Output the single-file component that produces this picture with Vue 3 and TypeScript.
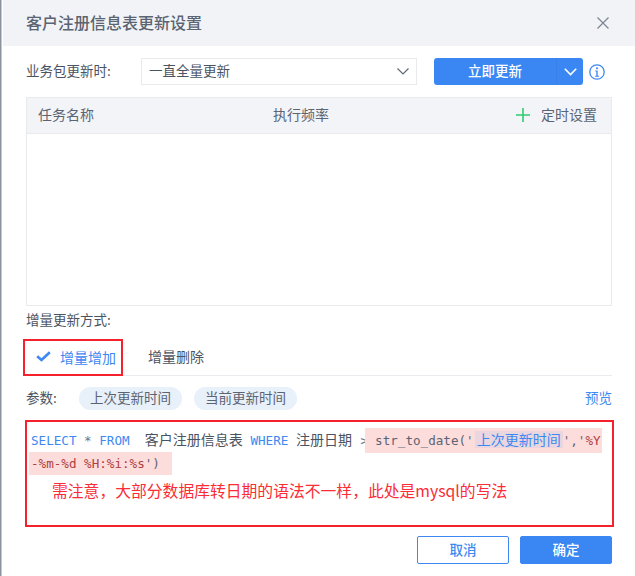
<script setup lang="ts">
const columns: string[] = ['任务名称', '执行频率']
</script>

<template>
  <div class="dialog">
    <header class="head">
      <h1 class="title">客户注册信息表更新设置</h1>
      <svg class="close" width="12" height="12" viewBox="0 0 12 12"><path d="M.5.5l11 11M11.5.5l-11 11" fill="none" stroke="#7d8592" stroke-width="1.2" /></svg>
    </header>
    <main class="body">
      <div class="update-row">
        <span class="label">业务包更新时:</span>
        <div class="select">
          <span>一直全量更新</span>
          <svg width="12" height="7" viewBox="0 0 12 7"><path d="M.5.5L6 6l5.5-5.5" fill="none" stroke="#5f6875" stroke-width="1.2" /></svg>
        </div>
        <div class="split">
          <span class="split-main">立即更新</span>
          <span class="split-arrow"><svg width="13" height="8" viewBox="0 0 13 8"><path d="M.8.8l5.7 5.7L12.2.8" fill="none" stroke="#fff" stroke-width="1.6" /></svg></span>
        </div>
        <svg class="info" width="16" height="16" viewBox="0 0 16 16">
          <circle cx="8" cy="8" r="7.2" fill="none" stroke="#3d88f2" stroke-width="1.3" />
          <rect x="7.1" y="3.4" width="1.8" height="1.8" fill="#3d88f2" />
          <path d="M6.3 6.6h2.4v5.2h1.2v1H6.1v-1h1.2V7.6h-1z" fill="#3d88f2" />
        </svg>
      </div>

      <section class="table">
        <div class="table-head">
          <span class="col-name">{{ columns[0] }}</span>
          <span class="col-freq">{{ columns[1] }}</span>
          <span class="col-action">
            <svg class="plus" width="14" height="14" viewBox="0 0 14 14"><path d="M7 0v14M0 7h14" stroke="#2ecc71" stroke-width="1.6" /></svg>
            定时设置
          </span>
        </div>
      </section>

      <div class="mode-label">增量更新方式:</div>
      <nav class="tabs">
        <div class="tab active">
          <svg width="15" height="11" viewBox="0 0 15 11"><path d="M1.2 5.2l4.3 3.8L13.8 1.2" fill="none" stroke="#3d88f2" stroke-width="2.6" /></svg>
          <span>增量增加</span>
          <i class="mark-tab"></i>
        </div>
        <div class="tab plain">增量删除</div>
      </nav>

      <div class="params">
        <span class="param-label">参数:</span>
        <span class="pill">上次更新时间</span>
        <span class="pill">当前更新时间</span>
        <a class="preview">预览</a>
      </div>

      <div class="sql">
        <div class="sql-line">
          <b class="kw">SELECT</b> <span class="op">*</span> <b class="kw">FROM</b>&nbsp; <span class="cn">客户注册信息表</span> <b class="kw">WHERE</b> <span class="cn">注册日期</span> <span class="op gt">&gt;</span><span class="hl">str_to_date('<span class="token">上次更新时间</span>','<em>%Y</em></span>
        </div>
        <div class="sql-line"><span class="hl second"><em>-%m-%d %H:%i:%s</em>')</span></div>
        <p class="note">需注意，大部分数据库转日期的语法不一样，此处是mysql的写法</p>
      </div>

      <footer class="foot">
        <button class="btn ghost">取消</button>
        <button class="btn solid">确定</button>
      </footer>
    </main>
  </div>
</template>

<style>
html, body { background: #fff; }
</style>

<style scoped>
.dialog {
  box-sizing: border-box;
  width: 635px;
  height: 576px;
  padding-left: 3px;
  background: #fff;
  position: relative;
  overflow: hidden;
  font-family: "Noto Sans CJK SC", "Noto Sans", sans-serif;
  font-size: 13.5px;
  color: #5b6472;
  box-shadow: inset 1.5px 0 0 #8d939c;
}
.head {
  height: 46px;
  background: #f1f3f7;
  display: flex;
  align-items: center;
  justify-content: space-between;
  padding: 0 26px 0 23px;
}
.title {
  margin: 0 0 2px;
  font-size: 16px;
  font-weight: 500;
  color: #5b6472;
}
.body { padding: 12px 23px 0 23px; }
.update-row { display: flex; align-items: center; height: 27px; }
.label { width: 115px; color: #4a5361; padding-bottom: 3px; }
.select {
  box-sizing: border-box;
  width: 276px;
  height: 27px;
  border: 1px solid #e8eaee;
  display: flex;
  align-items: center;
  justify-content: space-between;
  padding: 0 7px 0 7px;
  color: #4a5361;
}
.select span { padding-bottom: 4px; }
.split {
  margin-left: 17px;
  width: 149px;
  height: 27px;
  display: flex;
  background: #3a87f3;
  border-radius: 3px;
  color: #fff;
}
.split-main { flex: 1; display: flex; align-items: center; justify-content: center; font-weight: 500; padding-bottom: 4px; }
.split-arrow { width: 27px; display: flex; align-items: center; justify-content: center; border-left: 1px solid #3a80e6; box-sizing: border-box; }
.info { margin-left: 6px; }
.table {
  box-sizing: border-box;
  margin-top: 12px;
  width: 586px;
  height: 209px;
  border: 1px solid #e8eaee;
}
.table-head {
  background: #f3f4f8;
  border-bottom: 1px solid #e8eaee;
  display: grid;
  grid-template-columns: 235px 1fr auto;
  align-items: center;
  padding: 0 14px 4px 11px;
  box-sizing: content-box;
  height: 31px;
  font-size: 14px;
}
.col-action { display: flex; align-items: center; gap: 11px; }
.plus { margin-top: 2px; }
.mode-label { margin-top: 3px; height: 20px; line-height: 20px; color: #4a5361; }
.tabs {
  display: flex;
  align-items: center;
  height: 35px;
  margin-top: 11px;
  border-bottom: 1px solid #e8eaee;
  width: 586px;
  font-size: 14px;
}
.tab { display: flex; align-items: center; }
.active { position: relative; color: #3d88f2; padding-left: 10px; gap: 9px; width: 122px; box-sizing: border-box; height: 35px; padding-bottom: 2px; }
.plain { color: #4a5361; padding-bottom: 3px; }
.mark-tab {
  position: absolute;
  left: -3px;
  top: -1px;
  width: 100px;
  height: 37px;
  box-sizing: border-box;
  border: 2px solid #f5222d;
}
.params { display: flex; align-items: center; height: 23px; margin-top: 11px; width: 586px; }
.param-label { width: 53px; color: #4a5361; padding-bottom: 3px; }
.pill {
  width: 103px;
  height: 23px;
  line-height: 21px;
  text-align: center;
  border-radius: 12px;
  background: #e8f0fa;
  margin-right: 12px;
}
.preview { margin-left: auto; color: #3d88f2; padding-bottom: 4px; }
.sql {
  box-sizing: border-box;
  width: 589px;
  height: 107px;
  margin: 10px 0 0 -1px;
  padding: 5px 4px 0 4px;
  border: 2px solid #f5222d;
  color: #4a5361;
}
.sql-line {
  font-family: "DejaVu Sans Mono", monospace;
  font-size: 12.6px;
  line-height: 25px;
  height: 25px;
  white-space: nowrap;
}
.sql-line + .sql-line { height: 23px; line-height: 23px; }
.kw { font-weight: 400; color: #3d88f2; }
.op { color: #6b7482; }
.gt { margin-left: 1px; }
.cn { font-family: "Noto Sans CJK SC", sans-serif; font-size: 14px; color: #4a5361; }
.hl { background: #fddcdc; display: inline-block; height: 25px; color: #5b6472; margin-left: -3px; padding: 0 1px 0 10px; }
.second { height: 23px; line-height: 23px; margin-left: -2px; padding: 0 12px 0 2px; }
.hl em { font-style: normal; color: #b0403f; }
.token {
  display: inline-block;
  height: 17px;
  line-height: 17px;
  margin-left: 1px;
  font-family: "Noto Sans CJK SC", sans-serif;
  font-size: 14px;
  color: #3d88f2;
  background: #e9d6de;
  padding: 0 2px;
}
.note {
  margin: 4px 0 0 21px;
  font-size: 15.8px;
  line-height: 24px;
  color: #fb2c36;
}
.foot { display: flex; justify-content: flex-end; gap: 11px; margin-top: 9px; width: 586px; }
.btn {
  box-sizing: border-box;
  width: 92px;
  height: 28px;
  border-radius: 2px;
  font: inherit;
  font-weight: 500;
  padding: 0 0 2px;
}
.ghost { background: #fff; border: 1px solid #3d88f2; color: #3d88f2; }
.solid { background: #3a87f3; border: 1px solid #3a87f3; color: #fff; }
</style>
